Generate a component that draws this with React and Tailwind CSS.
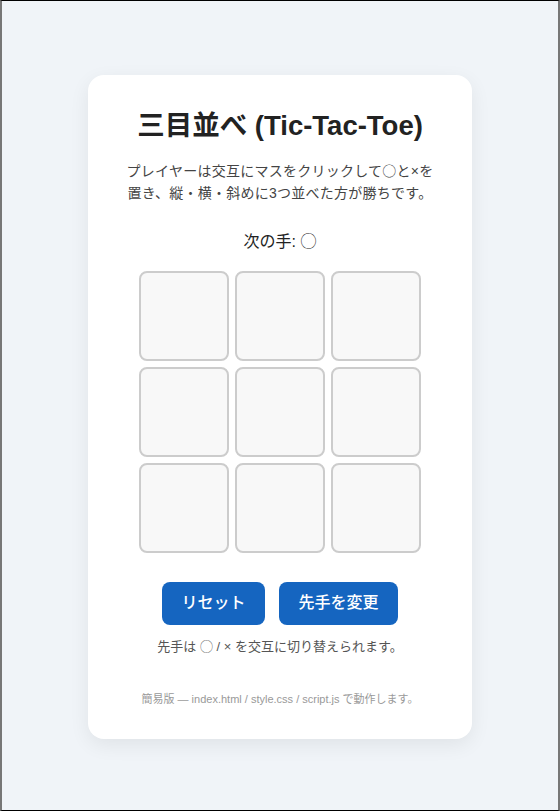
import React from "react";

const font = { fontFamily: '"Liberation Sans", "Noto Sans CJK JP", sans-serif' };
const cjk = { fontFamily: '"Noto Sans CJK JP", sans-serif' };

export default function App() {
  const cells = Array.from({ length: 9 });
  return (
    <div
      className="box-border h-[811px] w-full pt-[2px] bg-[#f0f4f8] border-t border-b border-t-black border-b-black border-l-2 border-r-2 border-l-[#777] border-r-[#777] flex items-center justify-center"
      style={font}
    >
      <div className="w-[384px] bg-white rounded-[16px] shadow-[0_6px_20px_rgba(0,0,0,0.07)] px-8 pt-[34px] pb-[32px] flex flex-col items-center text-center">
        <h1 className="text-[27.5px] leading-[34px] font-bold text-[#222]">三目並べ (Tic-Tac-Toe)</h1>
        <p className="mt-[16px] text-[14px] leading-[22px] text-[#444] tracking-[0.25px] whitespace-nowrap">
          プレイヤーは交互にマスをクリックして<span style={cjk}>○</span>と×を
          <br />
          置き、縦・横・斜めに3つ並べた方が勝ちです。
        </p>
        <div className="mt-[26px] text-[16px] leading-[24px] text-[#222]">次の手: ◯</div>
        <div className="mt-[17px] grid grid-cols-[90px_90px_90px] grid-rows-[90px_90px_90px] gap-[6px]">
          {cells.map((_, i) => (
            <button
              key={i}
              className="box-border w-[90px] h-[90px] rounded-[8px] border-2 border-[#cccccc] bg-[#f8f8f8]"
            />
          ))}
        </div>
        <div className="mt-[29px] flex gap-[14px]">
          <button className="h-[43px] px-[19.5px] rounded-[8px] bg-[#1565c0] text-white text-[16px] font-medium">リセット</button>
          <button className="h-[43px] px-[19.5px] rounded-[8px] bg-[#1565c0] text-white text-[16px] font-medium">先手を変更</button>
        </div>
        <div className="mt-[12px] text-[13px] leading-[20px] text-[#555]">先手は ◯ / × を交互に切り替えられます。</div>
        <div className="mt-[34px] text-[11px] leading-[16px] text-[#999]">
          簡易版 — index.html / style.css / script.js で動作します。
        </div>
      </div>
    </div>
  );
}
